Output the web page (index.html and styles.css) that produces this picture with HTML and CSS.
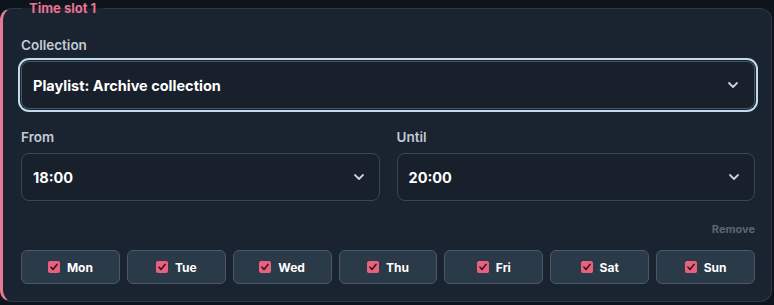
FILE: index.html
```html
<!DOCTYPE html>
<html>
<head>
<meta charset="utf-8">
<link rel="stylesheet" href="styles.css">
</head>
<body>
<fieldset class="slot">
  <legend class="slot-title">Time slot 1</legend>
  <div class="field">
    <label class="label">Collection</label>
    <div class="select focused">
      <span class="value">Playlist: Archive collection</span>
      <svg class="chev" width="12" height="8" viewBox="0 0 12 8"><path d="M2 2l4 4 4-4" fill="none" stroke="#c9d1dc" stroke-width="1.8" stroke-linecap="round" stroke-linejoin="round"/></svg>
    </div>
  </div>
  <div class="row">
    <div class="field">
      <label class="label">From</label>
      <div class="select">
        <span class="value">18:00</span>
        <svg class="chev" width="12" height="8" viewBox="0 0 12 8"><path d="M2 2l4 4 4-4" fill="none" stroke="#c9d1dc" stroke-width="1.8" stroke-linecap="round" stroke-linejoin="round"/></svg>
      </div>
    </div>
    <div class="field">
      <label class="label">Until</label>
      <div class="select">
        <span class="value">20:00</span>
        <svg class="chev" width="12" height="8" viewBox="0 0 12 8"><path d="M2 2l4 4 4-4" fill="none" stroke="#c9d1dc" stroke-width="1.8" stroke-linecap="round" stroke-linejoin="round"/></svg>
      </div>
    </div>
  </div>
  <div class="remove-row"><span class="remove">Remove</span></div>
  <div class="days">
    <div class="day"><span class="box"><svg width="12" height="12" viewBox="0 0 12 12"><path d="M3 6.2l2 2.2 4-5" fill="none" stroke="#3a1420" stroke-width="1.6" stroke-linecap="round" stroke-linejoin="round"/></svg></span>Mon</div>
    <div class="day"><span class="box"><svg width="12" height="12" viewBox="0 0 12 12"><path d="M3 6.2l2 2.2 4-5" fill="none" stroke="#3a1420" stroke-width="1.6" stroke-linecap="round" stroke-linejoin="round"/></svg></span>Tue</div>
    <div class="day"><span class="box"><svg width="12" height="12" viewBox="0 0 12 12"><path d="M3 6.2l2 2.2 4-5" fill="none" stroke="#3a1420" stroke-width="1.6" stroke-linecap="round" stroke-linejoin="round"/></svg></span>Wed</div>
    <div class="day"><span class="box"><svg width="12" height="12" viewBox="0 0 12 12"><path d="M3 6.2l2 2.2 4-5" fill="none" stroke="#3a1420" stroke-width="1.6" stroke-linecap="round" stroke-linejoin="round"/></svg></span>Thu</div>
    <div class="day"><span class="box"><svg width="12" height="12" viewBox="0 0 12 12"><path d="M3 6.2l2 2.2 4-5" fill="none" stroke="#3a1420" stroke-width="1.6" stroke-linecap="round" stroke-linejoin="round"/></svg></span>Fri</div>
    <div class="day"><span class="box"><svg width="12" height="12" viewBox="0 0 12 12"><path d="M3 6.2l2 2.2 4-5" fill="none" stroke="#3a1420" stroke-width="1.6" stroke-linecap="round" stroke-linejoin="round"/></svg></span>Sat</div>
    <div class="day"><span class="box"><svg width="12" height="12" viewBox="0 0 12 12"><path d="M3 6.2l2 2.2 4-5" fill="none" stroke="#3a1420" stroke-width="1.6" stroke-linecap="round" stroke-linejoin="round"/></svg></span>Sun</div>
  </div>
</fieldset>
</body>
</html>
```

FILE: styles.css
```css
* { box-sizing: border-box; }
html, body { margin: 0; padding: 0; }
body {
  background: #0e141c;
  font-family: Inter, "Noto Sans", sans-serif;
  width: 774px;
  height: 305px;
  overflow: hidden;
}
.slot {
  margin: 2px 2px 0 0;
  width: 772px;
  height: 300px;
  background: #1a2430;
  border: 1px solid #2c3844;
  border-left: 3px solid #e57a93;
  border-radius: 12px;
  padding: 22px 16px 16px 18px;
  display: flex;
  flex-direction: column;
}
.slot-title {
  margin-left: 1px;
  padding: 0 7px;
  color: #e8738d;
  font-size: 13px;
  font-weight: 700;
  line-height: 13px;
}
.field { display: flex; flex-direction: column; }
.label {
  color: #c3cbd6;
  font-size: 13.5px;
  font-weight: 600;
  line-height: 16px;
  margin-bottom: 8px;
}
.select {
  height: 48px;
  border: 1px solid #3b4652;
  border-radius: 8px;
  background: #17202b;
  display: flex;
  align-items: center;
  justify-content: space-between;
  padding: 0 14px 0 11px;
}
.select.focused {
  box-shadow: 0 0 0 1px #1a2430, 0 0 0 3px #c0dbee;
  border-color: #4b5663;
  padding-left: 11px;
  padding-right: 15px;
}
.value {
  color: #ffffff;
  font-size: 14.5px;
  font-weight: 700;
}
.row {
  display: grid;
  grid-template-columns: 1fr 1fr;
  gap: 17px;
  margin-top: 20px;
}
.remove-row {
  display: flex;
  justify-content: flex-end;
  margin-top: 21px;
}
.remove {
  color: #5b6571;
  font-size: 11px;
  font-weight: 700;
  line-height: 14px;
}
.days {
  display: grid;
  grid-template-columns: repeat(7, 1fr);
  gap: 7px;
  margin-top: 14px;
}
.day {
  height: 34px;
  background: #2b3a48;
  border: 1px solid #4a5968;
  border-radius: 6px;
  display: flex;
  align-items: center;
  justify-content: center;
  gap: 7px;
  color: #ffffff;
  font-size: 12px;
  font-weight: 700;
}
.box {
  width: 12px;
  height: 12px;
  background: #e8617f;
  border-radius: 2px;
  display: flex;
}
```
